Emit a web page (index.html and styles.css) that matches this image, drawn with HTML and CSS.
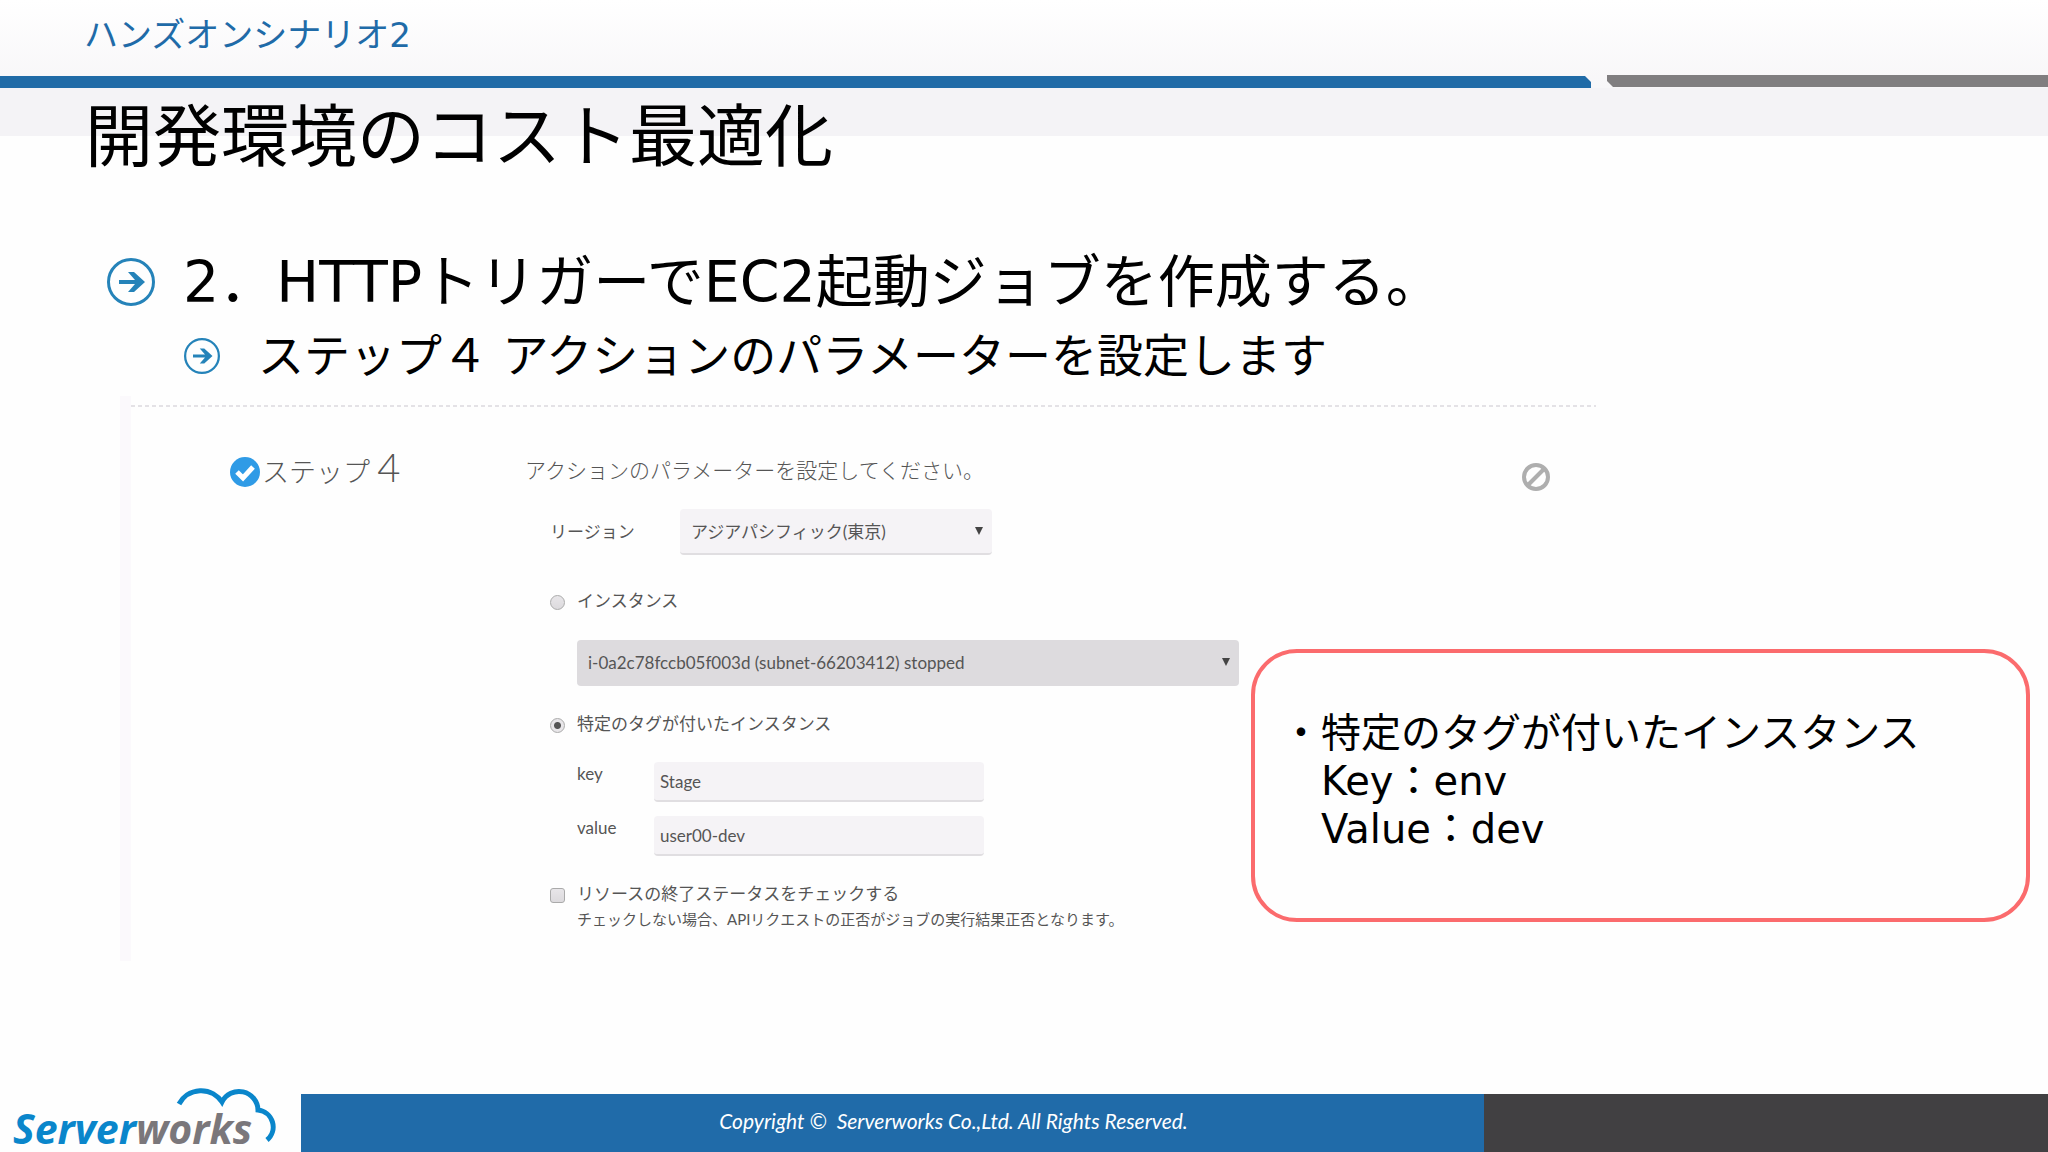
FILE: index.html
```html
<!DOCTYPE html>
<html lang="ja">
<head>
  <meta charset="UTF-8" />
  <meta name="viewport" content="width=device-width, initial-scale=1" />
  <title>開発環境のコスト最適化</title>
  <link rel="stylesheet" href="styles.css">
</head>
<body>
  <header class="topbar">
    <p class="topic">ハンズオンシナリオ2</p>
    <div class="rules">
      <div class="rule blue"></div>
      <div class="rule gray"></div>
    </div>
  </header>

  <main>
    <h1>開発環境のコスト最適化</h1>

    <div class="bullet">
      <svg class="arrow" viewBox="0 0 48 48">
        <circle cx="24" cy="24" r="22.5" />
        <path d="M12 22h16l-7-8h6l11 10-11 10h-6l7-8H12z" />
      </svg>
      <h2>2．HTTPトリガーでEC2起動ジョブを作成する。</h2>
    </div>
    <div class="bullet sub">
      <svg class="arrow" viewBox="0 0 48 48">
        <circle cx="24" cy="24" r="22.5" />
        <path d="M12 22h16l-7-8h6l11 10-11 10h-6l7-8H12z" />
      </svg>
      <h3>ステップ４ アクションのパラメーターを設定します</h3>
    </div>

    <div class="stage">
      <section class="panel">
        <div class="dash"></div>
        <div class="panel-body">
          <div class="step">
            <svg class="check" viewBox="0 0 30 30">
              <circle cx="15" cy="15" r="15" />
              <path d="M7 15l6 6 10-11" />
            </svg>
            <span>ステップ <b>4</b></span>
          </div>

          <form class="params">
            <p class="lead">アクションのパラメーターを設定してください。</p>
            <div class="fields">
              <div class="region">
                <label for="region">リージョン</label>
                <div class="select">
                  <select id="region">
                    <option>アジアパシフィック(東京)</option>
                  </select>
                </div>
              </div>

              <div class="choice">
                <input type="radio" name="target" id="byInstance">
                <label for="byInstance">インスタンス</label>
              </div>
              <div class="select instance">
                <select aria-label="インスタンス">
                  <option>i-0a2c78fccb05f003d (subnet-66203412) stopped</option>
                </select>
              </div>

              <div class="choice">
                <input type="radio" name="target" id="byTag" checked>
                <label for="byTag">特定のタグが付いたインスタンス</label>
              </div>
              <div class="tags">
                <label for="tagKey">key</label>
                <input type="text" id="tagKey" value="Stage">
                <label for="tagValue">value</label>
                <input type="text" id="tagValue" value="user00-dev">
              </div>

              <div class="choice">
                <input type="checkbox" id="checkStatus">
                <label for="checkStatus">リソースの終了ステータスをチェックする</label>
              </div>
              <p class="note">チェックしない場合、APIリクエストの正否がジョブの実行結果正否となります。</p>
            </div>
          </form>

          <svg class="ban" viewBox="0 0 28 28">
            <circle cx="14" cy="14" r="12" />
            <path d="M22 6L6 22" />
          </svg>
        </div>
      </section>

      <aside class="callout">
        <ul>
          <li>特定のタグが付いたインスタンス<br>Key：env<br>Value：dev</li>
        </ul>
      </aside>
    </div>
  </main>

  <footer>
    <div class="logo">
      <span class="server">Server</span><span class="works">works</span>
      <svg class="cloud" viewBox="0 0 100 54">
        <path d="M3 16A25 25 0 0 1 46 14A19 19 0 0 1 82 22A17 17 0 0 1 91 52" />
      </svg>
    </div>
    <div class="copyright">Copyright ©&nbsp; Serverworks Co.,Ltd. All Rights Reserved.</div>
    <div class="end"></div>
  </footer>
</body>
</html>
```

FILE: styles.css
```css
* {
  box-sizing: border-box;
}

body {
  margin: 0;
  min-height: 100vh;
  display: flex;
  flex-direction: column;
  font-family: 'DejaVu Sans', 'Noto Sans CJK JP', sans-serif;
  color: #000;
  background: #fefefe;
}

h1, h2, h3, p, ul {
  margin: 0;
  padding: 0;
  font-weight: normal;
}

/* header */
.topbar {
  background: linear-gradient(#fff, #f7f6f8);
}

.topic {
  height: 75px;
  padding: 12px 0 0 84px;
  font-size: 34px;
  line-height: 46px;
  color: #1f6ba8;
}

.rules {
  display: grid;
  grid-template-columns: 1591fr 441fr;
  gap: 16px;
  height: 13px;
}

.rule {
  height: 12px;
}

.rule.blue {
  margin-top: 1px;
  background: #206ba7;
  clip-path: polygon(0 0, calc(100% - 6px) 0, 100% 6px, 100% 100%, 0 100%);
}

.rule.gray {
  background: #807e80;
  clip-path: polygon(0 0, 100% 0, 100% 100%, 6px 100%, 0 6px);
}

main {
  flex: 1;
  background: linear-gradient(#f4f3f6, #f4f3f6) top / 100% 48px no-repeat;
}

h1 {
  padding: 6px 0 0 85px;
  font-size: 68px;
  line-height: 88px;
}

/* bullets */
.bullet {
  display: flex;
  align-items: center;
  gap: 28px;
  margin-top: 64px;
  padding-left: 107px;
}

.bullet h2 {
  font-size: 57px;
  line-height: 72px;
}

.arrow {
  width: 48px;
  height: 48px;
  fill: #2583b9;
}

.arrow circle {
  fill: none;
  stroke: #2583b9;
  stroke-width: 3;
}

.bullet.sub {
  gap: 38px;
  margin-top: 10px;
  padding-left: 184px;
}

.sub .arrow {
  width: 36px;
  height: 36px;
}

.bullet h3 {
  font-size: 46px;
  line-height: 56px;
}

/* settings panel */
.stage {
  position: relative;
  margin: 12px 18px 0 120px;
}

.panel {
  width: 77.3%;
  min-height: 565px;
  padding-top: 9px;
  border-left: 11px solid #fbf9fc;
  font-family: Lato, 'Noto Sans CJK JP', sans-serif;
  font-size: 17px;
  line-height: 24px;
  color: #555;
}

.dash {
  height: 2px;
  background: repeating-linear-gradient(90deg, #e4e2e6 0 4px, transparent 4px 7px);
}

.panel-body {
  display: grid;
  grid-template-columns: 295px 1fr 28px;
  padding: 48px 46px 0 99px;
}

.step {
  display: flex;
  align-items: flex-start;
  gap: 2px;
  height: 36px;
  font-size: 27px;
  font-weight: 300;
  line-height: 24px;
  color: #555;
}

.step b {
  font-size: 40px;
  font-weight: 300;
}

.check {
  width: 30px;
  height: 30px;
  margin-top: 2px;
  fill: #2f9be6;
}

.check path {
  fill: none;
  stroke: #fff;
  stroke-width: 5;
}

.lead {
  font-size: 21px;
  font-weight: 300;
  line-height: 30px;
  color: #555;
}

.fields {
  padding: 24px 0 0 25px;
}

.region {
  display: flex;
  align-items: center;
  margin-bottom: 34px;
}

.region label {
  width: 130px;
}

.select {
  position: relative;
  width: 312px;
}

.select.instance {
  width: 662px;
  margin: 27px 0 26px 27px;
}

.select::after {
  content: '';
  position: absolute;
  top: 18px;
  right: 9px;
  width: 8px;
  height: 8px;
  background: #444;
  clip-path: polygon(0 0, 100% 0, 50% 100%);
}

select,
input[type="text"] {
  appearance: none;
  display: block;
  width: 100%;
  height: 46px;
  padding: 0 11px;
  border: 0;
  border-bottom: 2px solid #e0dee1;
  border-radius: 4px;
  background: #f5f3f6;
  font-family: inherit;
  font-size: 17px;
  color: #555;
}

.instance select {
  border-color: #dddbde;
  background: #dddbde;
}

.choice {
  display: flex;
  align-items: center;
  gap: 12px;
}

input[type="radio"],
input[type="checkbox"] {
  appearance: none;
  width: 15px;
  height: 15px;
  margin: 2px 0 0;
  border: 1px solid #aaa;
  border-radius: 50%;
  background: linear-gradient(#e8e6e9, #dcdadd);
}

input[type="checkbox"] {
  border-radius: 3px;
}

input[type="radio"]:checked {
  background: radial-gradient(circle, #555 0 3px, #e8e6e9 4px);
}

.tags {
  display: grid;
  grid-template-columns: 77px 330px;
  row-gap: 14px;
  margin: 26px 0 26px 27px;
}

.tags input[type="text"] {
  height: 40px;
  padding: 0 6px;
}

.note {
  margin: 3px 0 0 27px;
  font-size: 15px;
  line-height: 20px;
}

.ban {
  width: 28px;
  height: 28px;
  margin-top: 8px;
  fill: none;
  stroke: #aeaeae;
  stroke-width: 4;
}

/* note laid over the panel */
.callout {
  position: absolute;
  top: 253px;
  right: 0;
  width: 779px;
  height: 273px;
  padding: 56px 30px 0 66px;
  border: 4px solid #fb6b6d;
  border-radius: 46px;
  background: #fefefe;
  font-size: 40px;
  line-height: 48px;
}

.callout ul {
  list-style: none;
}

.callout li::before {
  content: '・';
  float: left;
  margin-left: -40px;
}

/* footer */
footer {
  display: grid;
  grid-template-columns: 301px 1183fr 564fr;
  height: 58px;
}

.logo {
  position: relative;
  padding-left: 13px;
  font-family: 'Open Sans', sans-serif;
  font-size: 41px;
  font-weight: bold;
  font-style: italic;
  line-height: 68px;
}

.server {
  color: #0a86cb;
}

.works {
  color: #7a777b;
}

.cloud {
  position: absolute;
  top: -6px;
  left: 176px;
  width: 100px;
  height: 54px;
  fill: none;
  stroke: #0a86cb;
  stroke-width: 5;
}

.copyright {
  padding-left: 122px;
  background: #206ba9;
  color: #fff;
  font-family: Lato, sans-serif;
  font-size: 21px;
  font-style: italic;
  line-height: 54px;
  text-align: center;
}

.end {
  background: #414042;
}
```
